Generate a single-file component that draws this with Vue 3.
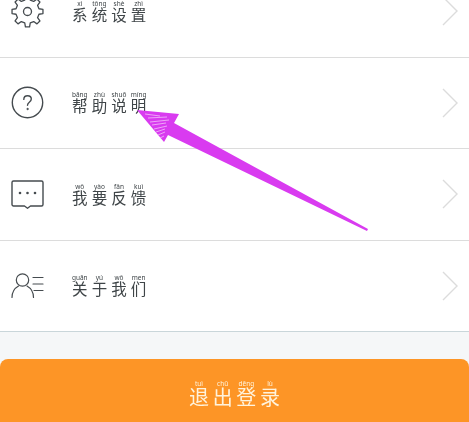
<script setup>
const rows = [
  { icon: 'gear', chars: [['系', 'xì'], ['统', 'tǒng'], ['设', 'shè'], ['置', 'zhì']] },
  { icon: 'help', chars: [['帮', 'bāng'], ['助', 'zhù'], ['说', 'shuō'], ['明', 'míng']] },
  { icon: 'chat', chars: [['我', 'wǒ'], ['要', 'yào'], ['反', 'fǎn'], ['馈', 'kuì']] },
  { icon: 'user', chars: [['关', 'guān'], ['于', 'yú'], ['我', 'wǒ'], ['们', 'men']] },
]
const logout = [['退', 'tuì'], ['出', 'chū'], ['登', 'dēng'], ['录', 'lù']]

const gearPath = (() => {
  const teeth = 8
  const pts = []
  const step = (2 * Math.PI) / teeth
  for (let i = 0; i < teeth; i++) {
    const a = i * step - Math.PI / 2
    const offs = [[-0.3, 11.8], [-0.17, 15.6], [0.17, 15.6], [0.3, 11.8]]
    for (const [o, r] of offs) {
      const t = a + o * step
      pts.push([(16.5 + r * Math.cos(t)).toFixed(2), (16.5 + r * Math.sin(t)).toFixed(2)])
    }
  }
  return 'M' + pts.map((p) => p.join(' ')).join('L') + 'Z'
})()

const hatch = [
  'M145 114 L160 116', 'M148 118 L167 117', 'M150 122 L169 120', 'M152 125 L166 123',
  'M154 129 L167 126', 'M156 132 L165 129', 'M158 135 L165 132', 'M160 138 L164 136',
]
</script>

<template>
  <div class="page">
    <ul class="list">
      <li v-for="row in rows" :key="row.icon" class="row">
        <span class="icon-box">
          <svg v-if="row.icon === 'gear'" width="33" height="33" viewBox="0 0 33 33" fill="none" stroke="#454b4f" stroke-width="1.3" stroke-linejoin="round">
            <path :d="gearPath" />
            <circle cx="16.5" cy="16.5" r="4" />
          </svg>
          <svg v-else-if="row.icon === 'help'" width="33" height="33" viewBox="0 0 33 33" fill="none" stroke="#454b4f" stroke-width="1.4" stroke-linecap="round">
            <circle cx="16.5" cy="16.5" r="15.2" />
            <path d="M12.8 13.4c0-2.300 1.700-3.700 3.800-3.700s3.700 1.400 3.700 3.400c0 1.500-.9 2.400-2 3.200-1.200.9-1.800 1.500-1.800 3" />
            <circle cx="16.5" cy="23" r=".7" fill="#454b4f" stroke-width=".8" />
          </svg>
          <svg v-else-if="row.icon === 'chat'" width="33" height="29" viewBox="0 0 33 29" fill="none" stroke="#454b4f" stroke-width="1.4" stroke-linejoin="round">
            <path d="M2.500 1h28a1.500 1.500 0 0 1 1.500 1.500v22a1.500 1.500 0 0 1-1.500 1.500H19.500l-3 2.300-3-2.300H2.500a1.500 1.500 0 0 1-1.500-1.500V2.500A1.500 1.500 0 0 1 2.500 1Z" />
            <circle cx="9" cy="13" r="1.300" fill="#454b4f" stroke="none" />
            <circle cx="16.500" cy="13" r="1.300" fill="#454b4f" stroke="none" />
            <circle cx="24" cy="13" r="1.300" fill="#454b4f" stroke="none" />
          </svg>
          <svg v-else width="33" height="25" viewBox="0 0 33 25" fill="none" stroke="#454b4f" stroke-width="1.200" stroke-linecap="round">
            <circle cx="11.500" cy="7" r="6.200" />
            <path d="M1 24.500c0-5.500 3-9.500 6.500-11.500M22.500 24.500c0-5.500-3-9.500-6.500-11.500" />
            <path d="M22 4.500h10M22 11h10M23 17.500h9" />
          </svg>
        </span>
        <span class="label">
          <span v-for="c in row.chars" :key="c[0]" class="cell">
            <span class="py">{{ c[1] }}</span>
            <span class="han">{{ c[0] }}</span>
          </span>
        </span>
        <svg class="chevron" width="17" height="30" viewBox="0 0 17 30" fill="none" stroke="#dcdcdc" stroke-width="1.4">
          <path d="M1 1l14 14L1 29" />
        </svg>
      </li>
    </ul>
    <button class="logout" type="button">
      <span v-for="c in logout" :key="c[0]" class="cell big">
        <span class="py">{{ c[1] }}</span>
        <span class="han">{{ c[0] }}</span>
      </span>
    </button>
    <svg class="arrow" width="469" height="422" viewBox="0 0 469 422">
      <path d="M137 110 L179 114 L174 123 L368 229 L367 231 L168 135 L164 142 Z" fill="#d93bf0" />
      <path v-for="h in hatch" :key="h" :d="h" stroke="#efb0f8" stroke-width="0.9" fill="none" />
    </svg>
  </div>
</template>

<style scoped>
.page {
  position: relative;
  width: 469px;
  height: 422px;
  overflow: hidden;
  background: #f5f7f8;
  font-family: "Noto Sans CJK SC", "Noto Sans", sans-serif;
}
.list {
  list-style: none;
  margin: -34px 0 0;
  padding: 0;
  background: #fff;
}
.row {
  display: flex;
  align-items: center;
  height: 91.500px;
  box-sizing: border-box;
  padding-left: 11px;
  padding-right: 10px;
  border-bottom: 1px solid #dcdcdc;
}
.row:last-child {
  border-bottom-color: #c9d6da;
}
.icon-box {
  width: 33px;
  display: flex;
  justify-content: center;
}
.label {
  display: flex;
  margin-left: 26px;
  margin-bottom: 1px;
}
.cell {
  width: 19.600px;
  display: flex;
  flex-direction: column;
  align-items: center;
  color: #3f4548;
  filter: blur(0.3px);
}
.py {
  font-family: "Noto Sans", sans-serif;
  font-size: 6.500px;
  line-height: 7px;
  white-space: nowrap;
}
.han {
  font-size: 15.500px;
  line-height: 15px;
}
.chevron {
  margin-left: auto;
}
.logout {
  display: flex;
  justify-content: center;
  align-items: flex-start;
  width: 469px;
  height: 64px;
  margin: 27px 0 0;
  padding: 21px 0 0;
  border: 0;
  border-radius: 8px 8px 0 0;
  background: #fd9526;
  font-family: inherit;
}
.big {
  width: 23.700px;
  color: #fff3dc;
}
.big .han {
  font-size: 20px;
  line-height: 19px;
}
.arrow {
  position: absolute;
  left: 0;
  top: 0;
  pointer-events: none;
}
</style>
